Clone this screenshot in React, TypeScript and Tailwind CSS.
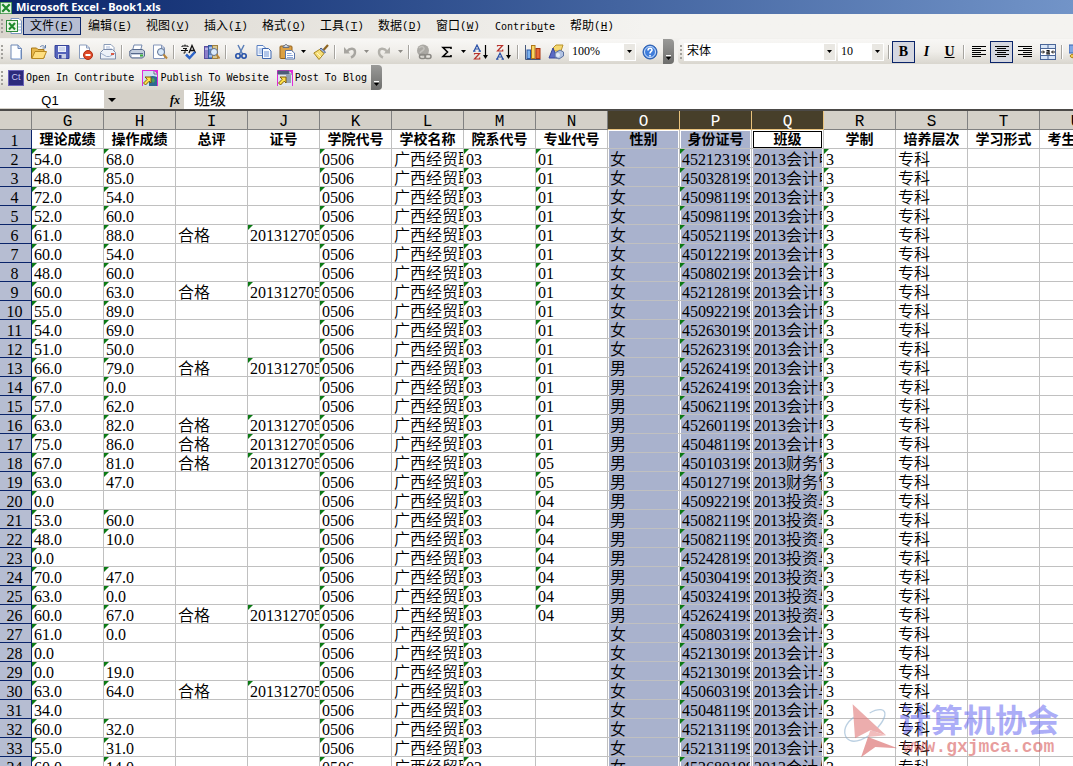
import type { ReactNode } from "react";
import clsx from "clsx";

interface RowData {
  theory: string;
  practice: string;
  passed?: boolean;
  major: string;
  sex: string;
  idCard: string;
  klass: string;
  plainId?: boolean;
}

interface MenuProps {
  text: string;
  hotkey: string;
}

const menus: MenuProps[] = [
  { text: "文件", hotkey: "F" },
  { text: "编辑", hotkey: "E" },
  { text: "视图", hotkey: "V" },
  { text: "插入", hotkey: "I" },
  { text: "格式", hotkey: "O" },
  { text: "工具", hotkey: "T" },
  { text: "数据", hotkey: "D" },
  { text: "窗口", hotkey: "W" },
];

const columns = [
  { letter: "G", title: "理论成绩" },
  { letter: "H", title: "操作成绩" },
  { letter: "I", title: "总评" },
  { letter: "J", title: "证号" },
  { letter: "K", title: "学院代号" },
  { letter: "L", title: "学校名称" },
  { letter: "M", title: "院系代号" },
  { letter: "N", title: "专业代号" },
  { letter: "O", title: "性别" },
  { letter: "P", title: "身份证号" },
  { letter: "Q", title: "班级" },
  { letter: "R", title: "学制" },
  { letter: "S", title: "培养层次" },
  { letter: "T", title: "学习形式" },
  { letter: "U", title: "考生类别" },
];

const selected = ["O", "P", "Q"];

const acc = "2013会计电";
const fin = "2013财务管";
const inv = "2013投资与";
const aud = "2013会计与";

const rows: RowData[] = [
  { theory: "54.0", practice: "68.0", major: "01", sex: "女", idCard: "452123199", klass: acc },
  { theory: "48.0", practice: "85.0", major: "01", sex: "女", idCard: "450328199", klass: acc },
  { theory: "72.0", practice: "54.0", major: "01", sex: "女", idCard: "450981199", klass: acc },
  { theory: "52.0", practice: "60.0", major: "01", sex: "女", idCard: "450981199", klass: acc },
  { theory: "61.0", practice: "88.0", passed: true, major: "01", sex: "女", idCard: "450521199", klass: acc },
  { theory: "60.0", practice: "54.0", major: "01", sex: "女", idCard: "450122199", klass: acc },
  { theory: "48.0", practice: "60.0", major: "01", sex: "女", idCard: "450802199", klass: acc },
  { theory: "60.0", practice: "63.0", passed: true, major: "01", sex: "女", idCard: "452128199", klass: acc },
  { theory: "55.0", practice: "89.0", major: "01", sex: "女", idCard: "450922199", klass: acc, plainId: true },
  { theory: "54.0", practice: "69.0", major: "01", sex: "女", idCard: "452630199", klass: acc },
  { theory: "51.0", practice: "50.0", major: "01", sex: "女", idCard: "452623199", klass: acc },
  { theory: "66.0", practice: "79.0", passed: true, major: "01", sex: "男", idCard: "452624199", klass: acc },
  { theory: "67.0", practice: "0.0", major: "01", sex: "男", idCard: "452624199", klass: acc },
  { theory: "57.0", practice: "62.0", major: "01", sex: "男", idCard: "450621199", klass: acc },
  { theory: "63.0", practice: "82.0", passed: true, major: "01", sex: "男", idCard: "452601199", klass: acc },
  { theory: "75.0", practice: "86.0", passed: true, major: "01", sex: "男", idCard: "450481199", klass: acc, plainId: true },
  { theory: "67.0", practice: "81.0", passed: true, major: "05", sex: "男", idCard: "450103199", klass: fin },
  { theory: "63.0", practice: "47.0", major: "05", sex: "男", idCard: "450127199", klass: fin },
  { theory: "0.0", practice: "", major: "04", sex: "男", idCard: "450922199", klass: inv, plainId: true },
  { theory: "53.0", practice: "60.0", major: "04", sex: "男", idCard: "450821199", klass: inv },
  { theory: "48.0", practice: "10.0", major: "04", sex: "男", idCard: "450821199", klass: inv },
  { theory: "0.0", practice: "", major: "04", sex: "男", idCard: "452428199", klass: inv },
  { theory: "70.0", practice: "47.0", major: "04", sex: "男", idCard: "450304199", klass: inv },
  { theory: "63.0", practice: "0.0", major: "04", sex: "男", idCard: "450324199", klass: inv },
  { theory: "60.0", practice: "67.0", passed: true, major: "04", sex: "男", idCard: "452624199", klass: inv },
  { theory: "61.0", practice: "0.0", major: "", sex: "女", idCard: "450803199", klass: aud },
  { theory: "0.0", practice: "", major: "", sex: "女", idCard: "452130199", klass: aud },
  { theory: "0.0", practice: "19.0", major: "", sex: "女", idCard: "452130199", klass: aud },
  { theory: "63.0", practice: "64.0", passed: true, major: "", sex: "女", idCard: "450603199", klass: aud },
  { theory: "34.0", practice: "", major: "", sex: "女", idCard: "450481199", klass: aud },
  { theory: "60.0", practice: "32.0", major: "", sex: "女", idCard: "452131199", klass: aud },
  { theory: "55.0", practice: "31.0", major: "", sex: "女", idCard: "452131199", klass: aud },
  { theory: "60.0", practice: "14.0", major: "", sex: "女", idCard: "452680199", klass: aud },
];

const Icon = ({ children, size = 16 }: { children: ReactNode; size?: number }) => (
  <svg width={size} height={size} viewBox="0 0 16 16" fill="none" aria-hidden="true" className="shrink-0">
    {children}
  </svg>
);

const ExcelIcon = () => (
  <Icon>
    <path d="M5 .5h8l2.5 2.5v12.5H5z" fill="#fff" stroke="#7a94c0" />
    <path d="M11 6h4M11 9h4M11 12h4" stroke="#9db8dc" />
    <rect x=".5" y="2.5" width="11" height="11" fill="#e8f5e4" stroke="#2f8a3c" />
    <path d="M3 5l6 6.500M9 5L3 11.500" stroke="#1d8a2c" strokeWidth="2" />
  </Icon>
);

const NewIcon = () => (
  <Icon>
    <path d="M3 1h7l3.500 3.500V15H3z" fill="#fdfeff" stroke="#6d87b5" />
    <path d="M10 1v3.500h3.500" fill="#c8d8f0" stroke="#6d87b5" />
    <path d="M12.500 6v8.500H5" stroke="#b5c9e8" />
  </Icon>
);

const OpenIcon = () => (
  <Icon>
    <path d="M9 3c2-2 4-1.500 5 .5M14.500 1v3h-3" stroke="#5d7ba8" />
    <path d="M.5 14V4h5l1.500 1.500h6V14z" fill="#e8b84c" stroke="#a87818" />
    <path d="M.8 14.500L4 7.500h11.500L12.500 14.500z" fill="#ffdf80" stroke="#b98920" />
  </Icon>
);

const SaveIcon = () => (
  <Icon>
    <path d="M1 1.500h14v13H2.500L1 13z" fill="#5563bb" stroke="#37449a" />
    <rect x="4" y="2" width="8" height="6" fill="#eef2fc" />
    <path d="M5 4h6M5 6h6" stroke="#b3bfe0" />
    <rect x="4" y="10" width="8" height="4.500" fill="#c9cfe6" />
    <rect x="5" y="11" width="2.500" height="3.500" fill="#37449a" />
  </Icon>
);

const PermissionIcon = () => (
  <Icon>
    <path d="M2.500 1h7l3 3v10.500h-10z" fill="#fff" stroke="#8a9cbd" />
    <path d="M9.500 1v3h3" stroke="#8a9cbd" />
    <circle cx="11" cy="11" r="4.500" fill="#e04a28" stroke="#b02c10" />
    <path d="M8.500 11h5" stroke="#fff" strokeWidth="2" />
  </Icon>
);

const MailIcon = () => (
  <Icon>
    <path d="M4 .5h7l3 3V8H4z" fill="#fff" stroke="#8b9cb8" />
    <path d="M6 3h4M6 5h6" stroke="#a8b8d8" />
    <path d="M.5 8.500l3-3h9l3 3v6.500H.5z" fill="#edf1f8" stroke="#7d8dab" />
    <path d="M.5 9l6 3.500h3l6-3.500" stroke="#9dadc8" />
    <rect x="11" y="9" width="3" height="2" fill="#d95c46" />
  </Icon>
);

const PrintIcon = () => (
  <Icon>
    <path d="M5 1h8l-1.500 5.500h-8z" fill="#fff" stroke="#7388ae" />
    <path d="M.8 7l2.500-1.500h10L15.500 7v5l-2 2H2.500L.8 12z" fill="#c3cede" stroke="#56698c" />
    <path d="M2 9.500h12" stroke="#56698c" />
    <rect x="3" y="11" width="8" height="2" fill="#fff" />
    <rect x="11" y="10.500" width="3" height="2" fill="#3fb23c" />
  </Icon>
);

const PreviewIcon = () => (
  <Icon>
    <path d="M1.500 1h8l3 3v10.500h-11z" fill="#fff" stroke="#8496ba" />
    <path d="M9.500 1v3h3" stroke="#8496ba" />
    <circle cx="9" cy="8" r="3.500" fill="#d7e8fa" stroke="#5c6f8f" />
    <path d="M11.500 10.500L15 14.500" stroke="#b9863a" strokeWidth="2" />
  </Icon>
);

const SpellingIcon = () => (
  <Icon>
    <path d="M1 3V2h6v1M4 .5V2M2 4.500h4L4 6v3H2.500M0 6.500h7" stroke="#111" />
    <path d="M8 9l3-7.500L14.500 9M9 6.500h4.500" stroke="#111" strokeWidth="1.300" />
    <path d="M5 10.500L8.500 14l5.500-6" stroke="#2c63c8" strokeWidth="2.500" />
  </Icon>
);

const ResearchIcon = () => (
  <Icon>
    <rect x=".5" y="2.500" width="4" height="12" fill="#8c7fca" stroke="#5a4fa0" />
    <rect x="4.500" y="1.500" width="4" height="13" fill="#5a86d0" stroke="#34589a" />
    <rect x="8.500" y="1.500" width="5" height="13" fill="#d8c890" stroke="#a08040" />
    <path d="M1 5h3M5 4h3M5 12h3" stroke="#e8eefc" />
    <circle cx="10" cy="8" r="3.500" fill="#dcebfa" stroke="#5c6f8f" />
    <path d="M12.500 10.500L15.500 14.500" stroke="#b9863a" strokeWidth="2" />
  </Icon>
);

const CutIcon = () => (
  <Icon>
    <path d="M5 1l4.500 9M11 1L6.500 10" stroke="#5b7fb8" strokeWidth="1.500" />
    <circle cx="5" cy="12" r="2.200" stroke="#2450a8" strokeWidth="1.600" />
    <circle cx="11" cy="12" r="2.200" stroke="#2450a8" strokeWidth="1.600" />
  </Icon>
);

const CopyIcon = () => (
  <Icon>
    <path d="M1 1.500h6l2.500 2.500v7.500H1z" fill="#f6faff" stroke="#5a7fc0" />
    <path d="M2.500 5h5M2.500 7h5M2.500 9h5" stroke="#86a6dc" />
    <path d="M6.500 4.500h6L15 7v7.500H6.500z" fill="#f6faff" stroke="#3e66ae" />
    <path d="M8 8h5M8 10h5M8 12h5" stroke="#6d92d4" />
  </Icon>
);

const PasteIcon = () => (
  <Icon>
    <rect x="1" y="2" width="12" height="12.500" rx="1" fill="#dba044" stroke="#93611a" />
    <path d="M4 3.500V2h1.500c0-2 3-2 3 0H10v1.500z" fill="#d3d8e2" stroke="#69707e" />
    <path d="M6.500 6.500h6L15.500 9v6h-9z" fill="#fff" stroke="#5774aa" />
    <path d="M8 9.500h4.500M8 11.500h6M8 13.500h6" stroke="#8ca8da" />
  </Icon>
);

const PainterIcon = () => (
  <Icon>
    <path d="M15 1l-4.500 5" stroke="#8e6420" strokeWidth="2.200" />
    <path d="M8 4l4.500 4L11 9.500 6.500 5.500z" fill="#9fb4dc" stroke="#4a5f90" />
    <path d="M6.500 5.500l4.500 4L6 15.500.8 9z" fill="#f7df78" stroke="#a88620" />
    <path d="M4 9l4 4" stroke="#fff7cc" />
  </Icon>
);

const UndoIcon = () => (
  <Icon>
    <path d="M5 7.500c3-4 8-3.500 8 .5 0 2.500-1.500 4.500-4 5.500" stroke="#a7a5a0" strokeWidth="2.500" />
    <path d="M2 3v6.500h6z" fill="#a7a5a0" />
  </Icon>
);

const RedoIcon = () => (
  <Icon>
    <path d="M11 7.500c-3-4-8-3.500-8 .5 0 2.500 1.500 4.500 4 5.500" stroke="#b3b1ab" strokeWidth="2.500" />
    <path d="M14 3v6.500H8z" fill="#b3b1ab" />
  </Icon>
);

const LinkIcon = () => (
  <Icon>
    <circle cx="7" cy="6.500" r="6" fill="#aaa8a3" />
    <path d="M3 4c2-2 4-2 5 0S5 7 4 9" stroke="#c4c2bd" strokeWidth="1.500" />
    <rect x="3.500" y="10.500" width="6" height="4" rx="2" stroke="#8b8984" strokeWidth="1.500" />
    <rect x="9" y="10.500" width="6" height="4" rx="2" stroke="#8b8984" strokeWidth="1.500" />
  </Icon>
);

const SumIcon = () => (
  <Icon>
    <path d="M12 5V3.500H4L8.500 8 4 12.500h8V11" stroke="#000" strokeWidth="1.600" />
  </Icon>
);

const SortIcon = ({ desc = false }: { desc?: boolean }) => (
  <Icon>
    <g transform={desc ? "translate(0 8)" : undefined}>
      <path d="M1 7l3-6 3 6M2.200 5h3.600M0 7.200h2.500M5.500 7.200H8" stroke="#2b52a8" strokeWidth="1.200" />
    </g>
    <g transform={desc ? "translate(0 -8)" : undefined}>
      <path d="M1.500 10.500V9.500H6.500L1.500 15h5.200v-1.500" stroke="#b8322c" strokeWidth="1.200" />
    </g>
    <path d="M12.500 1v12" stroke="#000" strokeWidth="1.200" />
    <path d="M10 11h5l-2.500 4z" fill="#000" />
  </Icon>
);

const ChartIcon = () => (
  <Icon>
    <path d="M.5 1v14.500H15.500" stroke="#46587c" />
    <rect x="2" y="6" width="3.500" height="8.500" fill="#7cb2ee" stroke="#2858a8" />
    <rect x="6.500" y="1.500" width="3.500" height="13" fill="#f7d764" stroke="#b07818" />
    <rect x="11" y="4.500" width="4" height="10" fill="#e56838" stroke="#a8330f" />
  </Icon>
);

const DrawingIcon = () => (
  <Icon>
    <path d="M5 4l3-3h7l-2 6H6z" fill="#f5d870" stroke="#b8922c" />
    <path d="M1 14L5 4l4 10z" fill="#5a6ac4" stroke="#37469c" />
    <path d="M7 9l5-3 3.500 2v4L11 15l-4-2z" fill="#b2c3e2" stroke="#5a70a0" />
    <circle cx="10" cy="11" r="2" fill="#e4ecf8" />
  </Icon>
);

const HelpIcon = () => (
  <Icon>
    <circle cx="8" cy="8" r="7" fill="#3f7ddb" stroke="#2456a8" />
    <circle cx="8" cy="8" r="5.500" stroke="#cfe2fb" />
    <path d="M6 6.500c0-3 4-3 4-.5C10 7.500 8 7.500 8 9.500M8 11v1.500" stroke="#fff" strokeWidth="1.600" />
  </Icon>
);

const AlignIcon = ({ kind }: { kind: "left" | "center" | "right" }) => (
  <Icon>
    {[1, 3, 5, 7, 9, 11].map((y, i) => {
      const w = i % 2 ? 9 : 14;
      const x = kind === "left" ? 1 : kind === "right" ? 15 - w : 1 + Math.floor((14 - w) / 2);
      return <rect key={y} x={x} y={y + 1} width={w} height="1" fill="#000" />;
    })}
  </Icon>
);

const MergeIcon = () => (
  <Icon>
    <rect x=".5" y=".5" width="15" height="15" fill="#d9e6f8" stroke="#4a6698" />
    <path d="M0 4.500h16M0 11.500h16M8 0v4M8 12v4" stroke="#4a6698" />
    <rect x="1" y="5" width="14" height="6" fill="#fff" />
    <path d="M1 8h3M12 8h3M3 6.500L4.500 8 3 9.500M13 6.500L11.500 8 13 9.500" stroke="#111" />
    <path d="M6.500 6.500H9V10H7V8h2M9 10h1" stroke="#111" strokeWidth="1.200" />
  </Icon>
);

const CurrencyIcon = () => (
  <Icon>
    <rect x="0" y="1" width="14" height="8" fill="#7fa6e4" stroke="#3c64b0" />
    <circle cx="7" cy="5" r="2.500" fill="#e7f0fd" />
    <ellipse cx="6" cy="12" rx="5" ry="2" fill="#f0c850" stroke="#ac8018" />
  </Icon>
);

const CtIcon = () => (
  <span className="flex size-4 items-center justify-center border border-[#6a62b8] bg-[#2c2a7c] font-['Liberation_Sans',sans-serif] text-[9px] leading-none text-[#c9c8f5]">
    Ct
  </span>
);

const PublishIcon = ({ blog = false }: { blog?: boolean }) => (
  <Icon>
    <rect width="16" height="16" fill="#e02cd8" />
    <path d="M1 1h11l3 3v12H1z" fill={blog ? "#dfe6ee" : "#cfe0f0"} />
    {blog ? (
      <path d="M1 1h11v3H1zM9 6h5M9 8h5M9 10h5M9 12h5" fill="#4c5c78" stroke="#4c5c78" />
    ) : (
      <path d="M7 8c2-3 5-2 8-1v9H7z" fill="#2f6a92" />
    )}
    {!blog && <path d="M9 9l3-1 1 3-2 2z" fill="#4da455" />}
    <path d="M12 1v3h3" fill="#fff" stroke="#5c6c88" />
    <path d="M3 7h6v6L7.200 11.200 3.500 15 1.500 13l3.700-3.700z" fill="#ffe14a" stroke="#7d5a08" />
  </Icon>
);

const ToolButton = ({ label, on, children }: { label: string; on?: boolean; children: ReactNode }) => (
  <button
    type="button"
    aria-label={label}
    aria-pressed={on}
    className={clsx(
      "flex h-[22px] w-[23px] shrink-0 items-center justify-center",
      on && "border border-[#0a246a] bg-[#d5d7e0]"
    )}
  >
    {children}
  </button>
);

const Drop = ({ label, dim }: { label: string; dim?: boolean }) => (
  <button type="button" aria-label={label} className="flex h-[22px] w-[11px] shrink-0 items-center justify-center">
    <Caret dim={dim} />
  </button>
);

const Caret = ({ dim }: { dim?: boolean }) => (
  <svg width="5" height="3" viewBox="0 0 5 3" aria-hidden="true" className="shrink-0">
    <path d="M0 0h5L2.500 3z" fill={dim ? "#8d8b86" : "#000"} />
  </svg>
);

const Sep = () => (
  <span className="flex h-[14px] w-[6px] shrink-0 justify-center">
    <span className="w-px bg-[#a6a49f]" />
    <span className="w-px bg-white" />
  </span>
);

const Grip = () => (
  <span className="flex w-1 shrink-0 flex-col gap-0.5 pl-px">
    {[0, 1, 2, 3].map((n) => (
      <span key={n} className="size-0.5 bg-[#a3a19c]" />
    ))}
  </span>
);

const EndCap = () => (
  <button
    type="button"
    aria-label="工具栏选项"
    className="flex h-full w-[11px] shrink-0 flex-col items-center justify-end gap-px rounded-r-sm bg-linear-to-b from-[#9a9a98] to-[#6e6e6c] pb-1"
  >
    <span className="h-px w-[5px] bg-white" />
    <Caret />
  </button>
);

const Combo = ({ id, label, value, wide }: { id: string; label: string; value: string; wide: string }) => (
  <div className={clsx("relative h-[18px] shrink-0 bg-white", wide)}>
    <label htmlFor={id} className="sr-only">
      {label}
    </label>
    <select
      id={id}
      defaultValue={value}
      className="block h-4 w-full appearance-none bg-transparent pl-[3px] font-['Liberation_Serif','Noto_Sans_CJK_SC',serif] text-[12px] leading-4 text-black outline-none"
    >
      <option>{value}</option>
    </select>
    <span className="pointer-events-none absolute inset-y-px right-px flex w-[11px] items-center justify-center bg-[#e9e7e2]">
      <Caret />
    </span>
  </div>
);

const Hotkey = ({ letter }: { letter: string }) => (
  <span className="font-['Liberation_Mono',monospace] text-[11px]">
    (<u>{letter}</u>)
  </span>
);

const MenuBar = () => (
  <nav className="flex h-6 items-center bg-linear-to-r from-[#dad6ce] to-[#f4f3f0] to-60% text-[12px]">
    <Grip />
    <span className="flex w-[19px] justify-center">
      <ExcelIcon />
    </span>
    {menus.map((item, i) => (
      <button
        type="button"
        key={item.text}
        className={clsx(
          "flex h-[18px] w-[58px] shrink-0 items-center justify-center whitespace-nowrap border",
          i === 0 ? "border-[#0a246a] bg-[#b6bdd2]" : "border-transparent"
        )}
      >
        {item.text}
        <Hotkey letter={item.hotkey} />
      </button>
    ))}
    <button type="button" className="h-[18px] w-[76px] shrink-0 font-['DejaVu_Sans_Mono',monospace] text-[10px]">
      Contrib<u>u</u>te
    </button>
    <button type="button" className="flex h-[18px] w-[58px] shrink-0 items-center justify-center whitespace-nowrap">
      帮助
      <Hotkey letter="H" />
    </button>
  </nav>
);

const barStyle = "bg-linear-to-b from-[#f8f7f5] via-[#f0eeea] to-[#d9d6ce]";

const StandardBar = () => (
  <div className={clsx("flex h-[25px] shrink-0 items-center rounded-r-sm", barStyle)}>
    <Grip />
    <ToolButton label="新建"><NewIcon /></ToolButton>
    <ToolButton label="打开"><OpenIcon /></ToolButton>
    <ToolButton label="保存"><SaveIcon /></ToolButton>
    <ToolButton label="权限"><PermissionIcon /></ToolButton>
    <ToolButton label="电子邮件"><MailIcon /></ToolButton>
    <Sep />
    <ToolButton label="打印"><PrintIcon /></ToolButton>
    <ToolButton label="打印预览"><PreviewIcon /></ToolButton>
    <Sep />
    <ToolButton label="拼写检查"><SpellingIcon /></ToolButton>
    <ToolButton label="信息检索"><ResearchIcon /></ToolButton>
    <Sep />
    <ToolButton label="剪切"><CutIcon /></ToolButton>
    <ToolButton label="复制"><CopyIcon /></ToolButton>
    <ToolButton label="粘贴"><PasteIcon /></ToolButton>
    <Drop label="粘贴选项" />
    <ToolButton label="格式刷"><PainterIcon /></ToolButton>
    <Sep />
    <ToolButton label="撤消"><UndoIcon /></ToolButton>
    <Drop label="撤消列表" dim />
    <ToolButton label="恢复"><RedoIcon /></ToolButton>
    <Drop label="恢复列表" dim />
    <Sep />
    <ToolButton label="超链接"><LinkIcon /></ToolButton>
    <ToolButton label="自动求和"><SumIcon /></ToolButton>
    <Drop label="求和选项" />
    <ToolButton label="升序"><SortIcon /></ToolButton>
    <ToolButton label="降序"><SortIcon desc /></ToolButton>
    <Sep />
    <ToolButton label="图表向导"><ChartIcon /></ToolButton>
    <ToolButton label="绘图"><DrawingIcon /></ToolButton>
    <span className="w-0.5" />
    <Combo id="zoom" label="显示比例" value="100%" wide="w-[67px]" />
    <span className="w-0.5" />
    <ToolButton label="帮助"><HelpIcon /></ToolButton>
    <span className="w-0.5" />
    <EndCap />
  </div>
);

const FormatBar = () => (
  <div className={clsx("flex h-[25px] min-w-0 flex-1 items-center overflow-hidden rounded-l-sm pl-px", barStyle)}>
    <Grip />
    <span className="w-px shrink-0" />
    <Combo id="font" label="字体" value="宋体" wide="w-[152px]" />
    <span className="w-0.5 shrink-0" />
    <Combo id="size" label="字号" value="10" wide="w-[46px]" />
    <span className="w-0.5 shrink-0" />
    <Sep />
    <ToolButton label="加粗" on>
      <b className="font-['Liberation_Serif',serif] text-[14px]">B</b>
    </ToolButton>
    <ToolButton label="倾斜">
      <i className="font-['Liberation_Serif',serif] text-[14px] font-bold">I</i>
    </ToolButton>
    <ToolButton label="下划线">
      <u className="font-['Liberation_Serif',serif] text-[14px] font-bold">U</u>
    </ToolButton>
    <Sep />
    <ToolButton label="左对齐"><AlignIcon kind="left" /></ToolButton>
    <ToolButton label="居中" on><AlignIcon kind="center" /></ToolButton>
    <ToolButton label="右对齐"><AlignIcon kind="right" /></ToolButton>
    <ToolButton label="合并及居中"><MergeIcon /></ToolButton>
    <Sep />
    <ToolButton label="货币样式"><CurrencyIcon /></ToolButton>
  </div>
);

const ContributeBar = () => (
  <div className="flex h-[26px] bg-[#f2f1ee] pt-px">
    <div
      className={clsx(
        "flex h-[25px] items-center rounded-r-sm font-['DejaVu_Sans_Mono',monospace] text-[10px] whitespace-nowrap",
        barStyle
      )}
    >
      <Grip />
      <div className="flex gap-2 px-1">
        <button type="button" className="flex items-center gap-0.5">
          <CtIcon />
          Open In Contribute
        </button>
        <button type="button" className="flex items-center gap-0.5">
          <PublishIcon />
          Publish To Website
        </button>
        <button type="button" className="flex items-center gap-0.5">
          <PublishIcon blog />
          Post To Blog
        </button>
      </div>
      <EndCap />
    </div>
  </div>
);

const FormulaBar = () => (
  <div className="flex h-[19px] bg-[#d4d0c8]">
    <input
      aria-label="名称框"
      defaultValue="Q1"
      className="h-[18px] w-[104px] bg-white pt-0.5 pr-1 text-center font-['Liberation_Sans',sans-serif] text-[13px] leading-4 outline-none"
    />
    <button type="button" aria-label="名称列表" className="flex w-4 items-center justify-center">
      <svg width="8" height="4" viewBox="0 0 8 4" aria-hidden="true">
        <path d="M0 0h8L4 4z" fill="#000" />
      </svg>
    </button>
    <button
      type="button"
      aria-label="插入函数"
      className="w-16 pr-1 text-right font-['Liberation_Serif',serif] text-[12px] leading-[18px] font-bold italic"
    >
      fx
    </button>
    <input
      aria-label="编辑栏"
      defaultValue="班级"
      className="min-w-0 flex-1 bg-white pb-[3px] pl-2.5 text-[16px] leading-4 outline-none"
    />
  </div>
);

const Cell = ({ text = "", flag, sel }: { text?: string; flag?: boolean; sel?: boolean }) => (
  <td className={clsx("relative h-[19px] border-r border-b border-[#c0c0c0] p-0", sel && "px-px")}>
    <div
      className={clsx(
        "h-[18px] overflow-hidden pt-[3px] leading-4 whitespace-nowrap",
        sel ? "bg-[#a9b2cd] pl-px" : "pl-0.5"
      )}
    >
      {text}
    </div>
    {flag && text && (
      <span className="absolute top-0 left-0 size-0 border-t-5 border-r-5 border-t-[#0b7a14] border-r-transparent" />
    )}
  </td>
);

const RowHead = ({ n }: { n: number }) => (
  <th
    scope="row"
    className="h-[19px] border-r border-b border-[#0a246a] bg-[#b6bdd2] p-0 text-center font-normal"
  >
    <div className="h-[18px] overflow-hidden pt-[3px] pr-0.5 leading-4">{n}</div>
  </th>
);

const Watermark = () => (
  <div className="pointer-events-none absolute top-[592px] left-[842px] flex items-center">
    <svg width="57" height="55" viewBox="65 40 171 165" aria-hidden="true" className="opacity-60">
      <path d="M105 80c-30 18-40 48-25 66 18 20 62 2 90-30 26-28 32-54 12-56-10-1-22 3-34 10" fill="none" stroke="#8fb2d0" strokeWidth="4" />
      <path d="M97 44L197 137 150 122 104 146z" fill="#e07878" />
      <path d="M143 142L232 176 165 172 122 203z" fill="#d86060" />
      <path d="M150 122l47 15-54 5z" fill="#e89090" />
    </svg>
    <div className="flex flex-col">
      <span className="text-[32px] leading-8 font-bold whitespace-nowrap text-[#5a5cf0]/50">计算机协会</span>
      <span className="pl-1 font-['Liberation_Mono',monospace] text-[18px] leading-5 font-bold text-[#d03c3c]/50">
        www.gxjmca.com
      </span>
    </div>
  </div>
);

const Sheet = () => (
  <div className="relative flex-1 overflow-hidden border-t-2 border-[#4c4a48] bg-white">
    <table className="w-[1112px] table-fixed border-separate border-spacing-0 font-['Liberation_Serif','Noto_Sans_CJK_SC',serif] text-[16px] font-[350]">
      <colgroup>
        <col className="w-8" />
        {columns.map((c) => (
          <col key={c.letter} className="w-[72px]" />
        ))}
      </colgroup>
      <thead>
        <tr>
          <td className="h-[19px] border-r border-b border-[#808080] bg-[#d4d0c8] p-0" />
          {columns.map((c) => (
            <th
              key={c.letter}
              scope="col"
              className={clsx(
                "h-[19px] border-r border-b p-0 text-center font-['Liberation_Mono',monospace] font-normal",
                selected.includes(c.letter)
                  ? "border-[#e8c27c] bg-[#473f2a] text-white"
                  : "border-[#808080] bg-[#d4d0c8]"
              )}
            >
              <div className="h-[18px] overflow-hidden pt-[3px] leading-4">{c.letter}</div>
            </th>
          ))}
        </tr>
      </thead>
      <tbody>
        <tr>
          <RowHead n={1} />
          {columns.map((c) => (
            <td
              key={c.letter}
              className={clsx(
                "h-[19px] border-r border-b border-[#c0c0c0] p-0",
                selected.includes(c.letter) && "px-px pt-px"
              )}
            >
              <div
                className={clsx(
                  "overflow-hidden text-center text-[14px] font-bold whitespace-nowrap",
                  c.letter === "Q"
                    ? "h-[17px] border border-black bg-white leading-[15px]"
                    : selected.includes(c.letter)
                      ? "h-[17px] bg-[#a9b2cd] leading-[17px]"
                      : "h-[18px] leading-[19px]"
                )}
              >
                {c.title}
              </div>
            </td>
          ))}
        </tr>
        {rows.map((row, i) => (
          <tr key={i}>
            <RowHead n={i + 2} />
            <Cell text={row.theory} flag />
            <Cell text={row.practice} flag />
            <Cell text={row.passed ? "合格" : ""} />
            <Cell text={row.passed ? "201312705" : ""} flag />
            <Cell text="0506" flag />
            <Cell text="广西经贸职" />
            <Cell text="03" flag />
            <Cell text={row.major} flag />
            <Cell text={row.sex} sel />
            <Cell text={row.idCard} flag={!row.plainId} sel />
            <Cell text={row.klass} sel />
            <Cell text="3" flag />
            <Cell text="专科" />
            <Cell />
            <Cell />
          </tr>
        ))}
      </tbody>
    </table>
    <Watermark />
  </div>
);

const App = () => {
  return (
    <div className="flex h-screen flex-col overflow-hidden bg-[#f2f1ee] font-['Liberation_Sans','Noto_Sans_CJK_SC',sans-serif] text-black">
      <header className="shrink-0">
        <div className="flex h-3.5 items-end gap-1 overflow-hidden bg-linear-to-r from-[#0a246a] to-[#7294c8]">
          <span className="flex h-3.5 items-end">
            <Icon size={12}>
              <rect width="16" height="16" fill="#e8f5e4" stroke="#2f8a3c" strokeWidth="2" />
              <path d="M3 3l10 10M13 3L3 13" stroke="#1d8a2c" strokeWidth="3" />
            </Icon>
          </span>
          <h1 className="font-['Noto_Sans',sans-serif] text-[11px] leading-[14px] font-bold whitespace-nowrap text-white">
            Microsoft Excel - Book1.xls
          </h1>
        </div>
        <MenuBar />
        <div className="flex h-[26px] gap-1 bg-[#f2f1ee] pt-px">
          <StandardBar />
          <FormatBar />
        </div>
        <ContributeBar />
        <FormulaBar />
      </header>
      <Sheet />
    </div>
  );
};

export default App;
